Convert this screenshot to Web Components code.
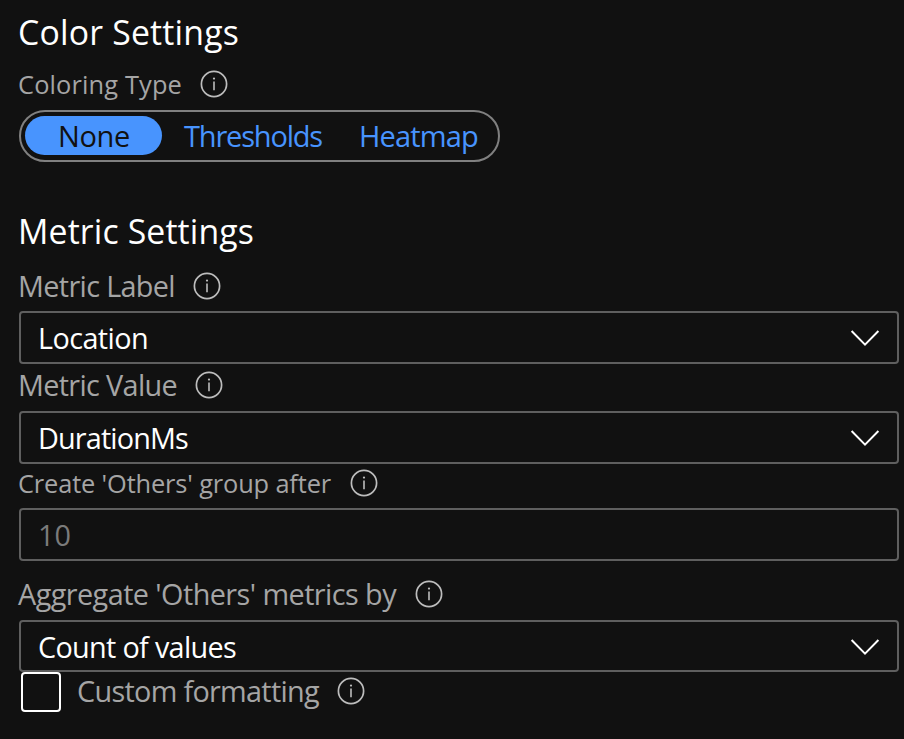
<!DOCTYPE html>
<html lang="en">
<head>
<meta charset="utf-8">
<title>Settings</title>
<style>
html,body{margin:0;background:#111}
body{font-family:"Open Sans","Noto Sans",sans-serif;color:#fff;overflow:hidden}
</style>
</head>
<body>
<settings-panel></settings-panel>
<script>
const define = (name, html, ready) => {
  const t = document.createElement('template');
  t.innerHTML = html;
  customElements.define(name, class extends HTMLElement {
    constructor(){ super(); this.attachShadow({mode:'open'}).append(t.content.cloneNode(true)); }
    connectedCallback(){ if (ready) ready(this); }
  });
};

// Text run tracked so that its advance equals the "w" attribute.
define('text-run', `<style>:host{display:block;flex:none;white-space:pre}span{display:inline-block}</style><span><slot></slot></span>`, el => {
  const w = parseFloat(el.getAttribute('w'));
  const s = el.shadowRoot.querySelector('span');
  el.style.width = w + 'px';
  s.style.letterSpacing = (w - s.getBoundingClientRect().width) / el.textContent.length + 'px';
});

define('info-icon', `<style>:host{display:block;flex:none;width:28px;height:28px}svg{display:block}</style>
<svg width="28" height="28" viewBox="0 0 28 28"><circle cx="14" cy="14" r="12.6" fill="none" stroke="#bdbdbd" stroke-width="1.7"/><path d="M14 11.6V20.2" stroke="#bdbdbd" stroke-width="1.6"/><circle cx="14" cy="8.6" r="1.1" fill="#bdbdbd"/></svg>`);

define('section-title', `<style>:host{display:flex;align-items:center;box-sizing:border-box;font-size:33.8px;line-height:42px;padding-left:18px;color:#fff}</style><slot></slot>`);

define('field-label', `<style>:host{display:flex;align-items:center;box-sizing:border-box;padding-left:18px;font-size:28.8px;line-height:38px;color:#a5a5a5}:host([small]){font-size:25.4px}</style><slot></slot><info-icon></info-icon>`);

define('pill-option', `<style>:host{display:flex;align-items:center;height:39px;box-sizing:border-box;border-radius:20px;font-size:29px;line-height:39px;color:#4894fe}:host([selected]){background:#4894fe;color:#111}</style><slot></slot>`);

define('pill-group', `<style>:host{display:flex;align-items:center;box-sizing:border-box;width:481px;height:52px;margin-left:19px;padding:0 4px 1px;border:2px solid #808080;border-radius:26px}</style><slot></slot>`);

define('field-box', `<style>:host{display:flex;align-items:center;justify-content:space-between;box-sizing:border-box;width:880px;height:53px;margin-left:19px;padding:1px 17px 0 17px;border:2px solid #5f5f5f;border-radius:4px;font-size:28.8px;line-height:38px;color:#fff}:host([placeholder]){color:#7b7b7b}svg{display:block}:host([placeholder]) svg{display:none}</style><slot></slot>
<svg width="30" height="18" viewBox="0 0 30 18"><path d="M1.6 2L15 15.6L28.4 2" fill="none" stroke="#fff" stroke-width="2"/></svg>`);

define('check-box', `<style>:host{display:block;flex:none;box-sizing:border-box;width:40px;height:40px;border:2px solid #fff;border-radius:4px}</style>`);

define('settings-panel', `<style>
:host{display:flex;flex-direction:column;height:739px;background:#111}
.t1{height:64px}.l1{height:46px;padding-bottom:6px}
.t2{height:42px;margin:48px 0 8px}.l2{height:51px}
.l3{height:47px;padding-bottom:5px}.l4{height:44px;padding-bottom:6px}.l5{height:59px;padding-top:6px}
.last{height:52px}
.check{display:flex;height:40px;padding-left:21px}
.check field-label{height:38px;padding-left:16px}
</style>
<section-title class="t1"><text-run w="221">Color Settings</text-run></section-title>
<field-label class="l1" small><text-run w="164" style="margin-right:17.5px">Coloring Type</text-run></field-label>
<pill-group>
 <pill-option selected style="width:137px;padding-left:33px"><text-run w="72">None</text-run></pill-option>
 <pill-option style="padding-left:22px"><text-run w="138">Thresholds</text-run></pill-option>
 <pill-option style="padding-left:37px"><text-run w="119">Heatmap</text-run></pill-option>
</pill-group>
<section-title class="t2"><text-run w="236">Metric Settings</text-run></section-title>
<field-label class="l2"><text-run w="157" style="margin-right:18px">Metric Label</text-run></field-label>
<field-box><text-run w="110">Location</text-run></field-box>
<field-label class="l3"><text-run w="159" style="margin-right:17.5px">Metric Value</text-run></field-label>
<field-box><text-run w="150">DurationMs</text-run></field-box>
<field-label class="l4" small><text-run w="313" style="margin-right:18.5px">Create 'Others' group after</text-run></field-label>
<field-box placeholder><text-run w="33">10</text-run></field-box>
<field-label class="l5"><text-run w="378" style="margin-right:18.5px">Aggregate 'Others' metrics by</text-run></field-label>
<field-box class="last"><text-run w="198">Count of values</text-run></field-box>
<div class="check"><check-box></check-box><field-label><text-run w="242" style="margin-right:17.5px">Custom formatting</text-run></field-label></div>`);
</script>
</body>
</html>
